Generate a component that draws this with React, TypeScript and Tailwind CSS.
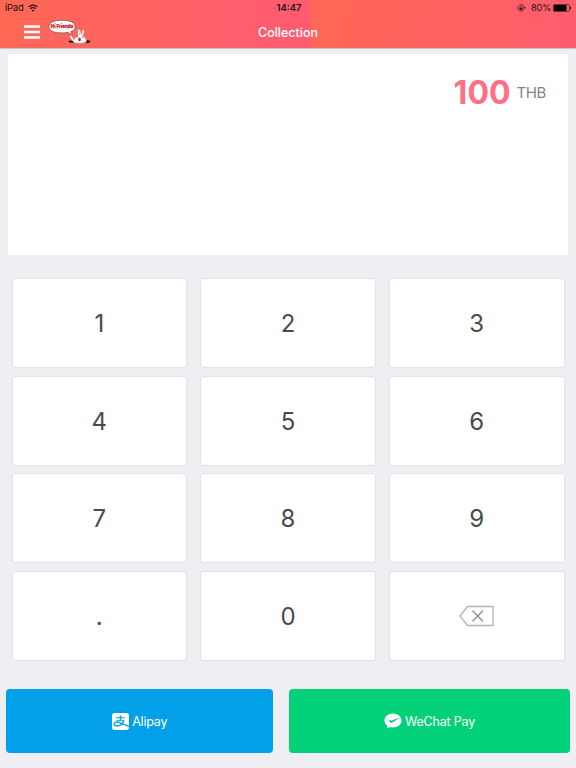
import React from "react";

const DIGITS = ["1", "2", "3", "4", "5", "6", "7", "8", "9", ".", "0"];

function WifiIcon() {
  return (
    <svg width="10" height="8" viewBox="0 0 20 16" fill="none" stroke="#241313" strokeWidth="2.600">
      <path d="M1.2 5.8C6.2 .8 13.8 .8 18.8 5.8" />
      <path d="M4.6 9.6c3-3 7.8-3 10.8 0" />
      <path d="M10 15.500 7 12.400c1.600-1.500 4.400-1.500 6 0Z" fill="#241313" stroke="none" />
    </svg>
  );
}

function MenuIcon() {
  return (
    <svg width="16" height="14" viewBox="0 0 16 14" fill="none" stroke="#fff" strokeWidth="2.300">
      <path d="M0 1.500h16M0 7h16M0 12.500h16" />
    </svg>
  );
}

function RotationLockIcon() {
  return (
    <svg width="9" height="8" viewBox="0 0 27 24" fill="none" stroke="#3a1519" strokeWidth="2">
      <path d="M22 9A10 10 0 1 0 20.500 17.500" />
      <path d="m17.800 10 4.500 5 4.500-5Z" fill="#3a1519" stroke="none" />
      <rect x="7.500" y="11" width="9" height="7" fill="#3a1519" stroke="none" />
      <path d="M9 11V9a3 3 0 0 1 6 0v2" />
    </svg>
  );
}

function BatteryIcon() {
  return (
    <svg width="19" height="8" viewBox="0 0 19 8">
      <rect x="0.5" y="0.5" width="16" height="7" rx="1" fill="none" stroke="#3a1519" strokeWidth="0.7" />
      <rect x="0.800" y="0.900" width="12.700" height="6.200" rx="0.4" fill="#080203" />
      <path d="M17.300 2.500c1.500.3 1.500 2.700 0 3Z" fill="#3a1519" />
    </svg>
  );
}

function FriendsLogo() {
  return (
    <svg width="44" height="26" viewBox="0 0 44 26">
      <path
        d="M14 1.300c8 0 13.200 2.300 13.200 6.400 0 2.200-1.600 3.900-4.400 4.900.2 1 .8 1.700 1.800 2.300-2 .1-3.500-.4-4.400-1.600-1.800.4-3.800.6-6.200.6C6.200 13.900.8 11.800.8 7.700S6 1.300 14 1.300Z"
        fill="#fff"
        stroke="#74434a"
        strokeWidth="0.700"
      />
      <text
        x="14"
        y="9.400"
        textAnchor="middle"
        textLength="22.500"
        lengthAdjust="spacingAndGlyphs"
        fill="#d31424"
        stroke="#d31424"
        strokeWidth="0.250"
        fontFamily="Inter, sans-serif"
        fontWeight="800"
        fontSize="5.300"
      >
        Hi Friends
      </text>
      <ellipse cx="24.500" cy="22.600" rx="4" ry="1.100" fill="#1a0d0e" />
      <ellipse cx="39" cy="22.600" rx="3.300" ry="1.300" fill="#1a0d0e" />
      <g fill="#fff" stroke="#9c6b6b" strokeWidth="0.400">
        <path d="M21.500 17.200c1.300-1.700 2.800-.3 3.600 2.300l3.400 2.700-4.200-.1Z" />
        <path d="M30.200 17c-.9-4.300-.6-6.800.6-6.900 1.300 0 2 2.500 2.400 5.300.4-2.900 1.400-5 2.400-4.700 1.200.4.700 3.500-.6 6.300 2.600 1.300 3.400 3.500 3.500 6-3.300 1.500-9.500 1.700-13.300.3.300-2.800 2.100-5.100 5-6.300Z" />
      </g>
      <path d="M31.100 12.300c.1 1.700.4 2.900.8 4.100M35.100 12.600l-1 3.600" stroke="#ff9da1" strokeWidth="0.600" />
      <ellipse cx="31.500" cy="20.400" rx="1.100" ry="1.700" fill="#c92b36" stroke="#392021" strokeWidth="0.400" />
      <path d="M28.800 18.200h.9M34 18.200h.9" stroke="#392021" strokeWidth="0.900" />
    </svg>
  );
}

function DeleteIcon() {
  return (
    <svg width="36" height="22" viewBox="0 0 36 22" fill="none">
      <path d="M8.500 1.500h25.500v19H8.500L1 11Z" stroke="#b4b4b4" strokeWidth="1.300" />
      <path d="m13.500 5.800 10.500 10.400M24 5.800 13.500 16.200" stroke="#8b8b8b" strokeWidth="1.300" />
    </svg>
  );
}

function AlipayIcon() {
  return (
    <svg width="17" height="17" viewBox="0 0 34 34">
      <rect width="34" height="34" rx="5.500" fill="#fff" />
      <g fill="none" stroke="#16a1e8">
        <path d="M8 9.500h18" strokeWidth="2" />
        <path d="M17 5v10" strokeWidth="3.400" />
        <path d="M9 15.200h15" strokeWidth="2" />
        <path d="M24 15c-2.500 6.500-7.500 11-13.500 11-4 0-6-1.600-6-4 0-2.700 2.600-4.200 6-4 5.500.3 11.500 5.200 23.500 8.500" strokeWidth="3" />
      </g>
    </svg>
  );
}

function WeChatPayIcon() {
  return (
    <svg width="18" height="16" viewBox="0 0 36 32">
      <path
        d="M18 1C8.300 1 1 7.200 1 15c0 4.500 2.300 8.300 6.200 10.900L6.500 31l5.700-3c1.900.6 3.800.9 5.800.9 9.700 0 17-6.100 17-13.900S27.700 1 18 1Z"
        fill="#fff"
      />
      <path d="m9.500 12.500 5 3.200L34 8 15 19.800c-1.200.7-2.300.4-2.800-.6Z" fill="#04d17b" />
    </svg>
  );
}

export default function App() {
  return (
    <div className="flex h-[768px] w-[576px] flex-col overflow-hidden bg-[#efeef3] font-['Inter','Noto_Sans',sans-serif]">
      <header className="h-[48.500px] shrink-0 border-b border-[#d5bdc3] bg-[linear-gradient(100deg,#ff6854_0%,#ff5b72_100%)] bg-[length:310.500px_100%]">
        <div className="grid h-4 grid-cols-3 items-center text-[9.500px] leading-4 text-[#241013]">
          <div className="flex items-center gap-[4px] pl-[5px]">
            <span className="tracking-[-0.250px]">iPad</span>
            <WifiIcon />
          </div>
          <span className="pl-[2px] text-center font-semibold tracking-[0px]">14:47</span>
          <div className="flex items-center justify-end pr-[4px]">
            <RotationLockIcon />
            <span className="mr-[2px] ml-[5px] text-[9.200px] tracking-[-0.200px]">80%</span>
            <BatteryIcon />
          </div>
        </div>
        <div className="grid h-8 grid-cols-3 items-center">
          <div className="flex items-center pl-6">
            <MenuIcon />
            <div className="ml-[7.500px]">
              <FriendsLogo />
            </div>
          </div>
          <h1 className="pt-[2px] text-center text-[12.500px] leading-[30px] font-medium text-white">Collection</h1>
        </div>
      </header>

      <section className="mx-2 mt-[5.500px] flex h-[201px] shrink-0 items-start justify-end bg-white pt-[19px] pr-[22px]">
        <div className="flex items-center gap-[6px]">
          <span className="text-[32px] leading-10 font-bold text-[#ff7085]">100</span>
          <span className="text-[15px] leading-10 tracking-[-0.400px] text-[#858585]">THB</span>
        </div>
      </section>

      <section className="mx-[11.500px] mt-[23px] grid h-[383px] shrink-0 grid-cols-3 grid-rows-4 gap-x-[13px] gap-y-[7.600px]">
        {DIGITS.map((digit) => (
          <button
            key={digit}
            className="flex items-center justify-center rounded-[3px] border border-[#e3e3e6] bg-white pt-[2px] text-[24px] leading-none text-[#4a4a4a]"
          >
            {digit}
          </button>
        ))}
        <button
          aria-label="Delete"
          className="flex items-center justify-center rounded-[3px] border border-[#e3e3e6] bg-white"
        >
          <DeleteIcon />
        </button>
      </section>

      <footer className="mx-[6px] mt-[28px] flex h-16 shrink-0 gap-4 text-[12.500px] text-white">
        <button className="flex w-[267px] items-center justify-center gap-[3.500px] rounded-[4px] bg-[#02a0e9]">
          <AlipayIcon />
          <span className="pt-[2px] tracking-[-0.200px]">Alipay</span>
        </button>
        <button className="flex w-[281px] items-center justify-center gap-[3px] rounded-[4px] bg-[#02d179]">
          <WeChatPayIcon />
          <span className="pt-[2px] tracking-[-0.200px]">WeChat Pay</span>
        </button>
      </footer>
    </div>
  );
}
